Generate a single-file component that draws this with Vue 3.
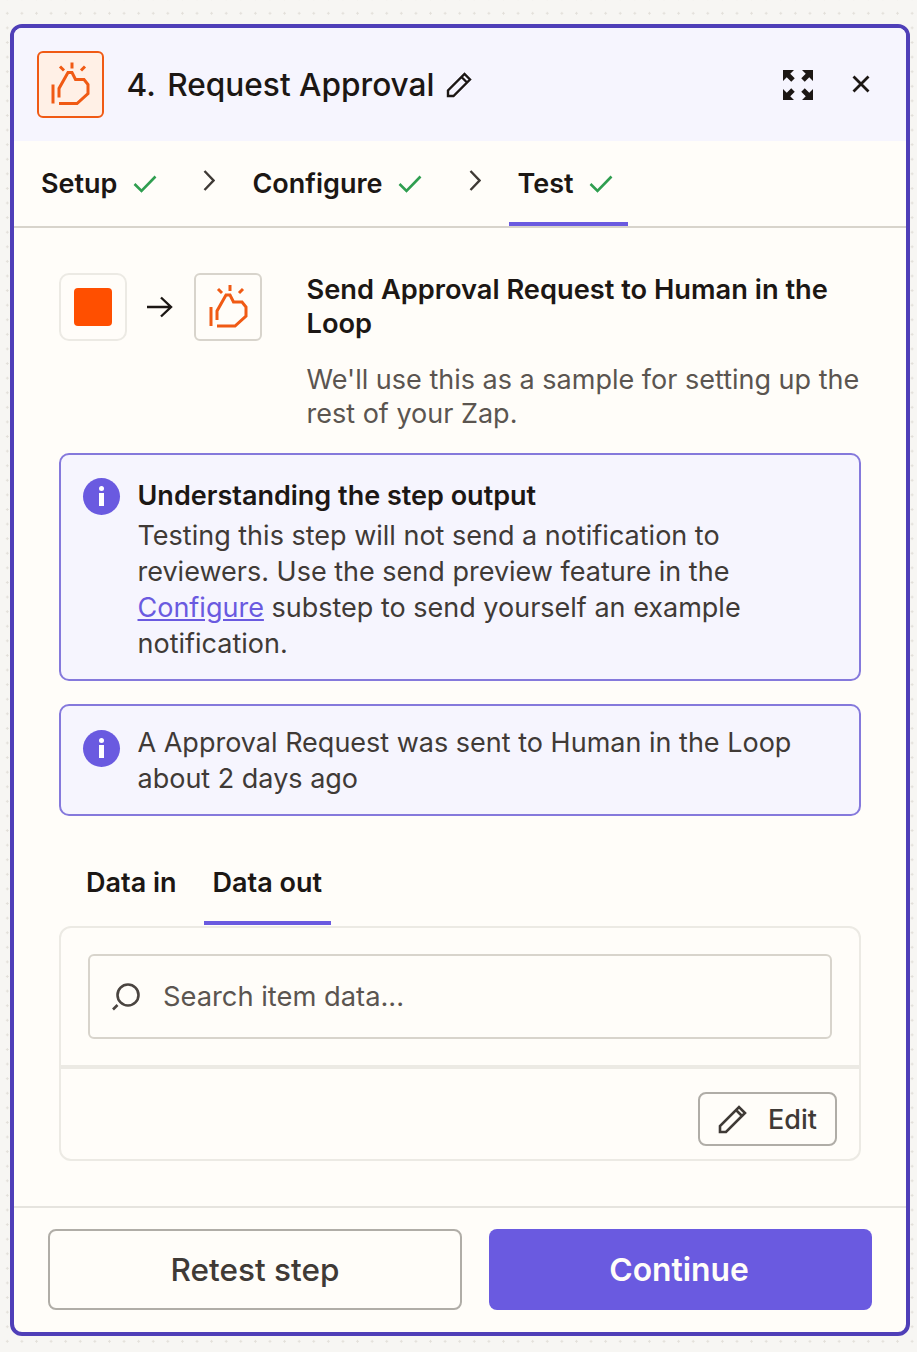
<template>
  <div class="page">
    <div class="panel">
      <header class="head">
        <div class="app-tile">
          <svg class="hand" viewBox="0 1.500 40 46" fill="none" stroke="#f05a14" stroke-width="3">
            <path d="M21 2v6M9 6l4 4M34 6l-4 4M2 24v19" />
            <path d="M8 37v-9l9-16h4l3.500 7H33l4 5v9L26 43H8" />
          </svg>
        </div>
        <h1 class="title"><span class="num">4.</span> Request Approval</h1>
        <svg class="pencil" viewBox="0 0 26 26" fill="none" stroke="#1c1714" stroke-width="2.400">
          <path d="M2 24v-5.500L18.500 2 24 7.500 7.500 24zM15.500 5l5.500 5.500" />
        </svg>
        <div class="head-actions">
          <svg class="expand" viewBox="0 0 30 30" fill="#1c1714">
            <path d="M0 0H11L7.250 3.750 11.750 8.250 8.250 11.750 3.750 7.250 0 11Z" />
            <path d="M30 0H19L22.750 3.750 18.250 8.250 21.750 11.750 26.250 7.250 30 11Z" />
            <path d="M0 30H11L7.250 26.250 11.750 21.750 8.250 18.250 3.750 22.750 0 19Z" />
            <path d="M30 30H19L22.750 26.250 18.250 21.750 21.750 18.250 26.250 22.750 30 19Z" />
          </svg>
          <svg class="close" viewBox="0 0 18 18" fill="none" stroke="#1c1714" stroke-width="2.800">
            <path d="M1.500 1.500l15 15M16.500 1.500l-15 15" />
          </svg>
        </div>
      </header>

      <nav class="steps">
        <template v-for="(s, i) in steps" :key="s.name">
          <div class="step" :class="{ active: s.active }">
            <span>{{ s.name }}</span>
            <svg class="check" viewBox="0 0 24 18" fill="none" stroke="#2f9e50" stroke-width="2.600">
              <path d="M1.500 9l7 7L22.500 1.500" />
            </svg>
          </div>
          <svg v-if="i < steps.length - 1" class="chev" :class="{ last: i === 1 }" viewBox="0 0 12 21" fill="none" stroke="#3f3a36" stroke-width="2.400">
            <path d="M1.500 1L10.500 10.500L1.500 20" />
          </svg>
        </template>
      </nav>

      <main class="body">
        <section class="intro">
          <div class="flow">
            <div class="tile tile-soft"><span class="square"></span></div>
            <svg class="arrow" viewBox="0 0 26 22" fill="none" stroke="#1c1714" stroke-width="2.400">
              <path d="M0 11h24M14 1.500L24 11l-10 9.500" />
            </svg>
            <div class="tile">
              <svg class="hand" viewBox="-1 1 40 46" fill="none" stroke="#f05a14" stroke-width="3">
                <path d="M21 2v6M9 6l4 4M34 6l-4 4M2 24v19" />
                <path d="M8 37v-9l9-16h4l3.500 7H33l4 5v9L26 43H8" />
              </svg>
            </div>
          </div>
          <div class="intro-text">
            <h2>Send Approval Request to Human in the Loop</h2>
            <p>We'll use this as a sample for setting up the rest of your Zap.</p>
          </div>
        </section>

        <div class="notice">
          <span class="info-dot"><i></i></span>
          <div>
            <strong>Understanding the step output</strong>
            <p>Testing this step will not send a notification to reviewers. Use the send preview feature in the <a href="#">Configure</a> substep to send yourself an example notification.</p>
          </div>
        </div>

        <div class="notice notice-short">
          <span class="info-dot"><i></i></span>
          <p>A Approval Request was sent to Human in the Loop about 2 days ago</p>
        </div>

        <div class="tabs">
          <div class="tab">Data in</div>
          <div class="tab active">Data out</div>
        </div>

        <div class="data-card">
          <div class="search-wrap">
            <div class="search">
              <svg class="search-icon" viewBox="0 0 31 28" fill="none" stroke="#4a4440" stroke-width="2.600">
                <circle cx="17" cy="12" r="10.500" />
                <path d="M6.500 22L2 26.500" />
              </svg>
              <span>Search item data...</span>
            </div>
          </div>
          <div class="card-foot">
            <button class="edit">
              <svg viewBox="0 0 30 30" fill="none" stroke="#3f3a36" stroke-width="2.600">
                <path d="M2 28v-6L21 3l6 6L8 28zM18 6l6 6" />
              </svg>
              Edit
            </button>
          </div>
        </div>
      </main>

      <footer class="foot">
        <button class="btn btn-ghost">Retest step</button>
        <button class="btn btn-primary">Continue</button>
      </footer>
    </div>
  </div>
</template>

<script setup>
const steps = [
  { name: 'Setup' },
  { name: 'Configure' },
  { name: 'Test', active: true }
];
</script>

<style>
html,
body {
  margin: 0;
  background: #f7f6f3;
}
</style>

<style scoped>
.page {
  box-sizing: border-box;
  width: 917px;
  height: 1352px;
  padding: 24px 7px 16px 10px;
  font-family: Inter, "Noto Sans", sans-serif;
  color: #1c1714;
  background-color: #f7f6f3;
  background-image: radial-gradient(#e3e0da 1px, transparent 1.2px);
  background-size: 14.600px 14.600px;
  background-position: 0 6px;
}

.panel {
  box-sizing: border-box;
  height: 1312px;
  border: 4px solid #4f3fb8;
  border-radius: 12px;
  background: #fffdf9;
  display: flex;
  flex-direction: column;
  overflow: hidden;
}

.head {
  height: 113px;
  flex: none;
  display: flex;
  align-items: center;
  padding: 0 36px 0 23px;
  background: #f6f5fe;
}

.app-tile {
  box-sizing: border-box;
  width: 67px;
  height: 67px;
  border: 2px solid #f05a14;
  border-radius: 6px;
  background: #fff0e6;
  display: flex;
  align-items: center;
  justify-content: center;
}

.hand {
  width: 40px;
  height: 46px;
}

.title {
  margin: 0 0 0 22.500px;
  font-size: 31.600px;
  font-weight: 500;
}

.num {
  margin-right: 3px;
}

.pencil {
  width: 26px;
  height: 26px;
  margin-left: 12px;
}

.head-actions {
  margin-left: auto;
  display: flex;
  align-items: center;
  gap: 39px;
}

.expand {
  width: 30px;
  height: 30px;
}

.close {
  width: 18px;
  height: 18px;
  margin-top: -2px;
}

.steps {
  height: 87px;
  flex: none;
  box-sizing: border-box;
  display: flex;
  align-items: center;
  border-bottom: 2px solid #d8d4cc;
  padding-left: 27px;
  font-size: 27px;
  font-weight: 600;
}

.step {
  display: flex;
  align-items: center;
  gap: 15.500px;
  height: 85px;
}

.step.active {
  padding: 0 15px 0 9px;
  box-shadow: inset 0 -4px 0 #6a5ae0;
}

.check {
  width: 24px;
  height: 18px;
}

.chev {
  width: 12px;
  height: 21px;
  margin: -6px 37px 0 46.500px;
}

.chev.last {
  margin-right: 28px;
}

.body {
  flex: 1;
  padding: 45px 45px 0;
  min-height: 0;
}

.intro {
  display: flex;
}

.flow {
  display: flex;
  align-items: center;
  align-self: flex-start;
  gap: 20px;
  width: 247.500px;
  flex: none;
}

.flow .tile:last-child {
  margin-left: 1px;
}

.tile {
  box-sizing: border-box;
  width: 68px;
  height: 68px;
  border: 2px solid #d8d4cc;
  border-radius: 6px;
  display: flex;
  align-items: center;
  justify-content: center;
}

.tile-soft {
  border-color: #eceae4;
  border-radius: 10px;
}

.square {
  width: 38px;
  height: 38px;
  border-radius: 4px;
  background: #ff4f00;
}

.arrow {
  width: 26px;
  height: 22px;
}

.intro-text h2 {
  margin: 0;
  font-size: 27.250px;
  line-height: 34px;
  font-weight: 600;
}

.intro-text p {
  margin: 22px 0 0;
  font-size: 27px;
  line-height: 34px;
  color: #5b5550;
}

.notice {
  box-sizing: border-box;
  display: flex;
  gap: 17.500px;
  margin-top: 22px;
  padding: 23px 22px 17px;
  border: 2px solid #8579dc;
  border-radius: 10px;
  background: #f6f5fe;
  font-size: 27px;
  line-height: 36px;
  color: #403a36;
}

.notice-short {
  margin-top: 23px;
  padding-top: 19px;
  padding-bottom: 17px;
}

.notice-short .info-dot {
  margin-top: 5px;
}

.notice strong {
  display: block;
  margin-bottom: 4px;
  font-weight: 600;
  color: #1c1714;
}

.notice p {
  margin: 0;
}

.notice a {
  color: #6a5ae0;
}

.info-dot {
  position: relative;
  flex: none;
  width: 37px;
  height: 37px;
  border-radius: 50%;
  background: #6a5ae0;
}

.info-dot i {
  position: absolute;
  left: 16px;
  top: 15px;
  width: 5px;
  height: 13px;
  background: #fff;
}

.info-dot i::before {
  content: "";
  position: absolute;
  top: -7px;
  left: 0;
  width: 5px;
  height: 5px;
  border-radius: 50%;
  background: #fff;
}

.tabs {
  display: flex;
  margin-top: 24px;
  padding-left: 18px;
  font-size: 27px;
  font-weight: 600;
  gap: 18px;
}

.tab {
  height: 85px;
  display: flex;
  align-items: center;
  padding: 0 9px;
}

.tab.active {
  box-shadow: inset 0 -4px 0 #6a5ae0;
}

.data-card {
  margin-top: 1px;
  border: 2px solid #eceae4;
  border-radius: 12px;
}

.search-wrap {
  padding: 26px 27px 26px;
  border-bottom: 4px solid #eceae4;
}

.search {
  box-sizing: border-box;
  height: 85px;
  display: flex;
  align-items: center;
  gap: 21px;
  padding-left: 21px;
  border: 2px solid #d8d4cc;
  border-radius: 6px;
  font-size: 27.300px;
  color: #5b5550;
}

.search-icon {
  width: 31px;
  height: 28px;
}

.card-foot {
  display: flex;
  justify-content: flex-end;
  padding: 23px 22px 13px;
}

.edit {
  box-sizing: border-box;
  width: 139px;
  height: 54px;
  display: flex;
  align-items: center;
  justify-content: center;
  gap: 20px;
  border: 2px solid #b0ada7;
  border-radius: 8px;
  background: transparent;
  font: 500 27px Inter, sans-serif;
  color: #3f3a36;
}

.edit svg {
  width: 30px;
  height: 30px;
}

.foot {
  flex: none;
  height: 126px;
  box-sizing: border-box;
  display: flex;
  gap: 27px;
  padding: 21px 34px 0;
  border-top: 2px solid #e6e4df;
}

.btn {
  height: 81px;
  box-sizing: border-box;
  border-radius: 8px;
  font: 500 31.500px Inter, sans-serif;
}

.btn-ghost {
  width: 414px;
  border: 2px solid #b0ada7;
  background: transparent;
  color: #3f3a36;
}

.btn-primary {
  flex: 1;
  border: 0;
  padding: 0 3px 0 0;
  background: #6a5ae0;
  color: #fffdf9;
  font-weight: 600;
  font-size: 31.800px;
}
</style>
